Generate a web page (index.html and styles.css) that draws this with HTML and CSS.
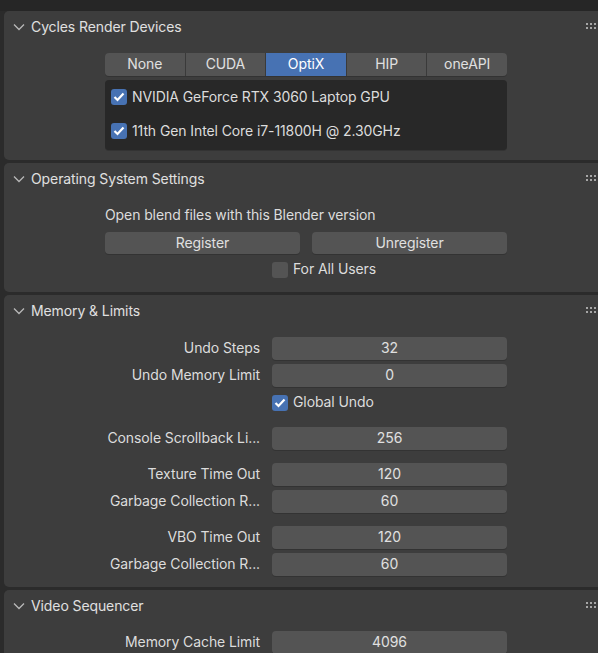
FILE: index.html
```html
<!DOCTYPE html>
<html>
<head>
<meta charset="utf-8">
<link rel="stylesheet" href="styles.css">
</head>
<body>
<div class="topbar"></div>

<section class="panel">
  <div class="panel-header">
    <svg class="chev" width="12" height="8" viewBox="0 0 12 8"><polyline points="1,1.5 6,6.5 11,1.5" fill="none" stroke="#b8b8b8" stroke-width="1.3"/></svg>
    <span class="title">Cycles Render Devices</span>
    <span class="grip"><i></i><i></i><i></i><i></i><i></i><i></i></span>
  </div>
  <div class="content c1">
    <div class="enum">
      <div class="seg">None</div>
      <div class="seg">CUDA</div>
      <div class="seg active">OptiX</div>
      <div class="seg">HIP</div>
      <div class="seg">oneAPI</div>
    </div>
    <div class="devbox">
      <div class="devrow"><span class="cb on"><svg width="12" height="10" viewBox="0 0 12 10"><polyline points="1.5,5 4.5,8 10.5,1.5" fill="none" stroke="#fff" stroke-width="2.2"/></svg></span><span>NVIDIA GeForce RTX 3060 Laptop GPU</span></div>
      <div class="devrow"><span class="cb on"><svg width="12" height="10" viewBox="0 0 12 10"><polyline points="1.5,5 4.5,8 10.5,1.5" fill="none" stroke="#fff" stroke-width="2.2"/></svg></span><span>11th Gen Intel Core i7-11800H @ 2.30GHz</span></div>
    </div>
  </div>
</section>

<section class="panel">
  <div class="panel-header">
    <svg class="chev" width="12" height="8" viewBox="0 0 12 8"><polyline points="1,1.5 6,6.5 11,1.5" fill="none" stroke="#b8b8b8" stroke-width="1.3"/></svg>
    <span class="title">Operating System Settings</span>
    <span class="grip"><i></i><i></i><i></i><i></i><i></i><i></i></span>
  </div>
  <div class="content c2">
    <div class="textrow">Open blend files with this Blender version</div>
    <div class="btnrow">
      <div class="btn">Register</div>
      <div class="btn">Unregister</div>
    </div>
    <div class="row">
      <div class="label"></div>
      <div class="checkline"><span class="cb"></span><span>For All Users</span></div>
    </div>
  </div>
</section>

<section class="panel">
  <div class="panel-header">
    <svg class="chev" width="12" height="8" viewBox="0 0 12 8"><polyline points="1,1.5 6,6.5 11,1.5" fill="none" stroke="#b8b8b8" stroke-width="1.3"/></svg>
    <span class="title">Memory &amp; Limits</span>
    <span class="grip"><i></i><i></i><i></i><i></i><i></i><i></i></span>
  </div>
  <div class="content c3">
    <div class="group">
      <div class="row"><div class="label">Undo Steps</div><div class="field">32</div></div>
      <div class="row"><div class="label">Undo Memory Limit</div><div class="field">0</div></div>
      <div class="row"><div class="label"></div><div class="checkline"><span class="cb on"><svg width="12" height="10" viewBox="0 0 12 10"><polyline points="1.5,5 4.5,8 10.5,1.5" fill="none" stroke="#fff" stroke-width="2.2"/></svg></span><span>Global Undo</span></div></div>
    </div>
    <div class="group">
      <div class="row"><div class="label">Console Scrollback Li...</div><div class="field">256</div></div>
    </div>
    <div class="group">
      <div class="row"><div class="label">Texture Time Out</div><div class="field">120</div></div>
      <div class="row"><div class="label">Garbage Collection R...</div><div class="field">60</div></div>
    </div>
    <div class="group">
      <div class="row"><div class="label">VBO Time Out</div><div class="field">120</div></div>
      <div class="row"><div class="label">Garbage Collection R...</div><div class="field">60</div></div>
    </div>
  </div>
</section>

<section class="panel">
  <div class="panel-header">
    <svg class="chev" width="12" height="8" viewBox="0 0 12 8"><polyline points="1,1.5 6,6.5 11,1.5" fill="none" stroke="#b8b8b8" stroke-width="1.3"/></svg>
    <span class="title">Video Sequencer</span>
    <span class="grip"><i></i><i></i><i></i><i></i><i></i><i></i></span>
  </div>
  <div class="content c4">
    <div class="row"><div class="label">Memory Cache Limit</div><div class="field">4096</div></div>
  </div>
</section>
</body>
</html>
```

FILE: styles.css
```css
html, body {
  margin: 0;
  padding: 0;
  background: #2b2b2b;
  overflow: hidden;
}
body {
  width: 598px;
  height: 653px;
  font-family: Inter, "Noto Sans", sans-serif;
  font-size: 14px;
  letter-spacing: -0.1px;
  color: #dcdcdc;
}
.topbar {
  height: 11px;
  background: #262626;
}
.panel {
  margin-left: 4px;
  margin-right: -6px;
  margin-bottom: 3px;
  background: #3d3d3d;
  border-radius: 5px 0 0 5px;
}
.panel-header {
  height: 32px;
  box-sizing: border-box;
  padding-bottom: 2px;
  display: flex;
  align-items: center;
  position: relative;
}
.chev {
  margin-left: 9px;
  margin-right: 6px;
  margin-top: 2px;
}
.title {
  color: #e0e0e0;
}
.grip {
  position: absolute;
  left: 582px;
  top: 12px;
  width: 10px;
  display: grid;
  grid-template-columns: repeat(3, 2px);
  grid-auto-rows: 2px;
  gap: 2px;
}
.grip i {
  display: block;
  background: #a6a6a6;
}
.content {
  width: 402px;
  margin-left: 101px;
  display: flex;
  flex-direction: column;
}
.c1 { padding: 10px 0 10px; }
.c2 { padding: 9px 0 11px; }
.c3 { padding: 10px 0 11px; gap: 13px; }
.c4 { padding: 9px 0 10px; }

.enum {
  display: flex;
  height: 23px;
  gap: 1px;
  border-radius: 4px;
  overflow: hidden;
  background: #3a3a3a;
  box-shadow: 0 1px 0 #333;
}
.seg {
  flex: 1;
  box-sizing: border-box;
  padding-bottom: 2px;
  background: #545454;
  display: flex;
  align-items: center;
  justify-content: center;
  color: #e0e0e0;
}
.seg.active {
  background: #4772b3;
  color: #fff;
}
.devbox {
  margin-top: 4px;
  height: 70px;
  background: #282828;
  border-radius: 4px;
  box-shadow: 0 1px 0 #333;
  display: flex;
  flex-direction: column;
}
.devrow {
  height: 34px;
  display: flex;
  align-items: center;
  padding-left: 6px;
  gap: 5px;
}
.devrow > span:last-child,
.checkline > span:last-child,
.label,
.textrow {
  position: relative;
  top: -1px;
}

.cb {
  width: 16px;
  height: 16px;
  border-radius: 3px;
  background: #545454;
  display: inline-flex;
  align-items: center;
  justify-content: center;
  flex: none;
}
.cb.on {
  background: #4772b3;
}

.textrow {
  height: 23px;
  display: flex;
  align-items: center;
}
.btnrow {
  margin-top: 5px;
  display: flex;
  gap: 12px;
  height: 22px;
}
.btn {
  flex: 1;
  box-sizing: border-box;
  padding-bottom: 2px;
  background: #545454;
  border-radius: 4px;
  box-shadow: 0 1px 0 #333;
  display: flex;
  align-items: center;
  justify-content: center;
  color: #e0e0e0;
}
.c2 .row { margin-top: 4px; }

.group {
  display: flex;
  flex-direction: column;
  gap: 4px;
}
.row {
  display: flex;
  height: 23px;
  align-items: center;
}
.label {
  width: 167px;
  flex: none;
  box-sizing: border-box;
  padding-right: 12px;
  text-align: right;
  white-space: nowrap;
  color: #dcdcdc;
}
.field {
  flex: 1;
  height: 23px;
  box-sizing: border-box;
  padding-bottom: 2px;
  background: #545454;
  border-radius: 4px;
  box-shadow: 0 1px 0 #333;
  display: flex;
  align-items: center;
  justify-content: center;
  color: #e0e0e0;
}
.checkline {
  display: flex;
  align-items: center;
  gap: 5px;
}
```
